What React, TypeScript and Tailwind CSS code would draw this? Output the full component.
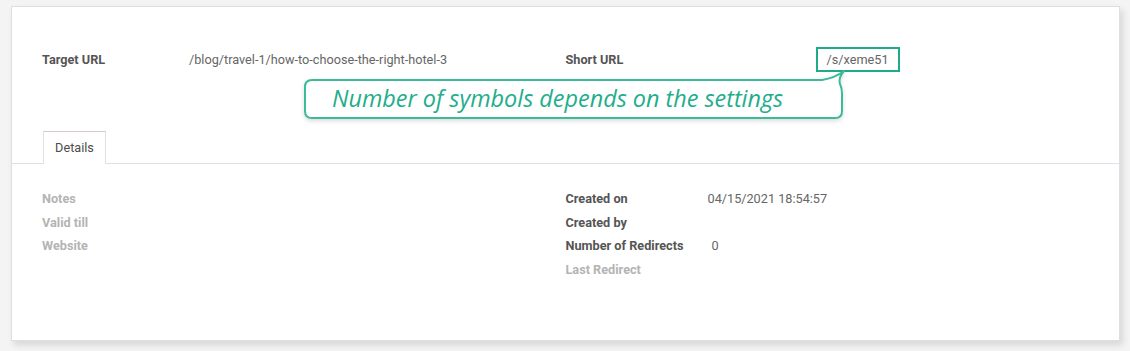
export default function App() {
  return (
    <div className="min-h-[351px] w-[1130px] bg-[#f4f4f4] pl-[11px] pt-[6px] font-['Roboto',sans-serif] text-[12.7px]">
      <div className="relative h-[335px] w-[1109px] border border-[#dcdfe3] bg-white shadow-[3px_4px_7px_rgba(0,0,0,0.12)]">
        {/* Header fields */}
        <div className="grid h-[124px] grid-cols-2 px-[30px] pt-[40px]">
          <div className="flex h-[25px] items-center">
            <span className="w-[147px] font-bold text-[#555555]">Target URL</span>
            <span className="text-[#666666]">/blog/travel-1/how-to-choose-the-right-hotel-3</span>
          </div>
          <div className="flex h-[25px] items-center">
            <span className="w-[250px] font-bold text-[#555555]">Short URL</span>
            <span className="flex h-[25px] items-center border-2 border-[#1fab8a] px-[9px] text-[#666666]">
              /s/xeme51
            </span>
          </div>
        </div>

        {/* Tabs */}
        <div className="flex border-b border-[#dee2e6] px-[31px]">
          <div className="-mb-px flex h-[33px] w-[63px] items-center justify-center border border-b-0 border-[#dee2e6] border-t-[#d6c9cf] bg-white text-[#4c4c4c]">
            Details
          </div>
        </div>

        {/* Details */}
        <div className="grid grid-cols-2 px-[30px] pt-[23px]">
          <div className="flex flex-col">
            <div className="flex h-[23.5px] items-center font-bold text-[#b4b4b4]">Notes</div>
            <div className="flex h-[23.5px] items-center font-bold text-[#b4b4b4]">Valid till</div>
            <div className="flex h-[23.5px] items-center font-bold text-[#b4b4b4]">Website</div>
          </div>
          <div className="flex flex-col">
            <div className="flex h-[23.5px] items-center">
              <span className="w-[142px] font-bold text-[#555555]">Created on</span>
              <span className="text-[#666666]">04/15/2021 18:54:57</span>
            </div>
            <div className="flex h-[23.5px] items-center">
              <span className="w-[142px] font-bold text-[#555555]">Created by</span>
            </div>
            <div className="flex h-[23.5px] items-center">
              <span className="w-[142px] font-bold text-[#555555]">Number of Redirects</span>
              <span className="pl-[4px] text-[#666666]">0</span>
            </div>
            <div className="flex h-[23.5px] items-center">
              <span className="w-[142px] font-bold text-[#b4b4b4]">Last Redirect</span>
            </div>
          </div>
        </div>

        {/* Callout */}
        <svg
          className="absolute left-[291px] top-[61px] drop-shadow-[0_2px_2px_rgba(0,0,0,0.14)]"
          width="548"
          height="54"
          viewBox="0 0 548 54"
        >
          <path
            d="M9 12 L519 12 Q532 10 541 3 Q535 10 537 16 Q539 20 539 26 L539 43 Q539 50 532 50 L9 50 Q2 50 2 43 L2 19 Q2 12 9 12 Z"
            fill="white"
            stroke="#3dba9a"
            strokeWidth="2"
            strokeLinejoin="round"
          />
        </svg>
        <div className="absolute left-[293px] top-[73px] flex h-[38px] w-[538px] items-center pl-[27px] font-['Open_Sans',sans-serif] text-[23.4px] italic text-[#22ad8b]">
          Number of symbols depends on the settings
        </div>
      </div>
    </div>
  );
}
